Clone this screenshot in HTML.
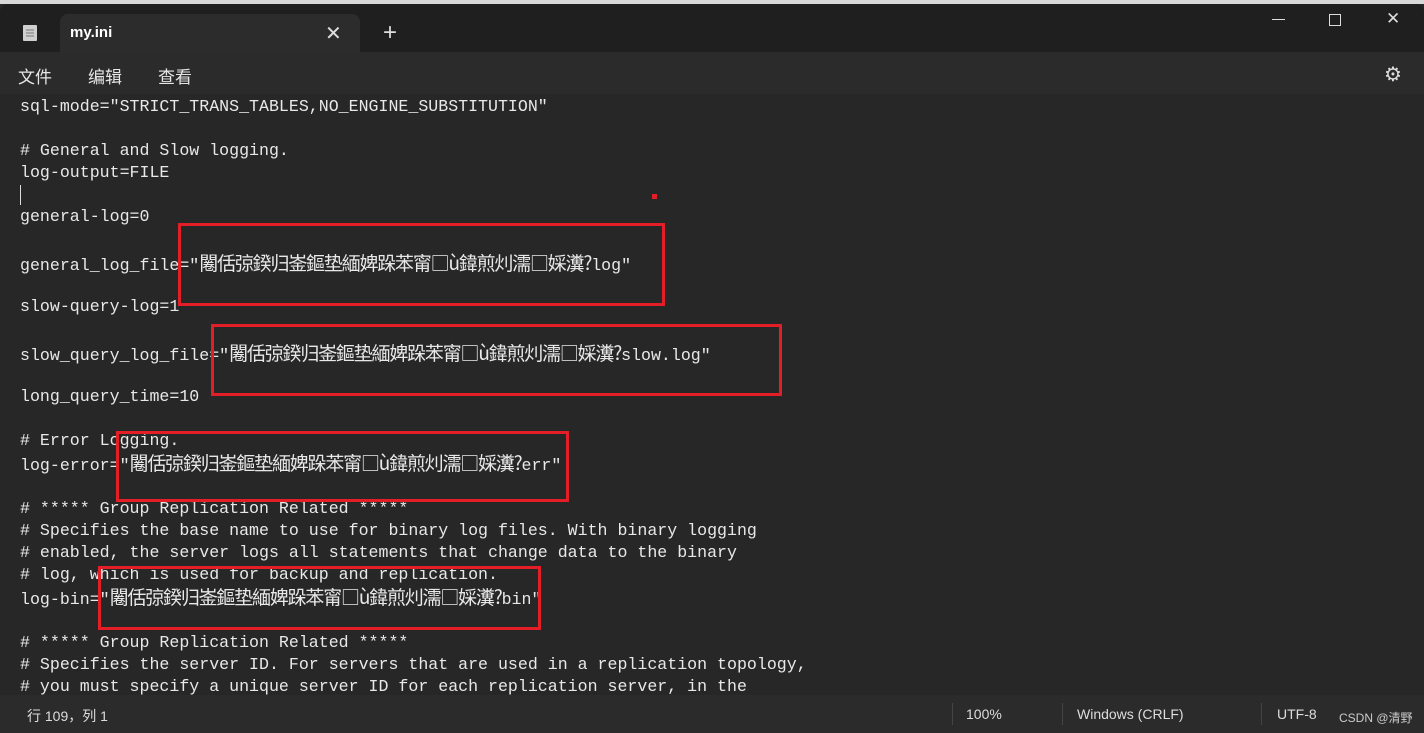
<!DOCTYPE html>
<html><head><meta charset="utf-8"><style>
body{margin:0;width:1424px;height:733px;overflow:hidden;background:#272727;position:relative;font-family:"Liberation Sans","Noto Sans CJK SC",sans-serif;color:#e6e6e6}
.top{position:absolute;left:0;top:0;width:1424px;height:4px;background:#d8d8d8}
.title{position:absolute;left:0;top:4px;width:1424px;height:48px;background:#1f1f1f;border-radius:8px 8px 0 0}
.tab{position:absolute;left:60px;top:14px;width:300px;height:38px;background:#2c2c2c;border-radius:8px 8px 0 0}
.menu{position:absolute;left:0;top:52px;width:1424px;height:42px;background:#2b2b2b}
.status{position:absolute;left:0;top:695px;width:1424px;height:38px;background:#2b2b2b;font-size:14px;color:#ddd}
.l{position:absolute;left:20px;font-family:"Liberation Mono",monospace;font-size:16.6px;white-space:pre;color:#e8e8e8;line-height:22px}
.c{font-family:"Noto Sans CJK SC",sans-serif;font-size:19px;letter-spacing:-1.2px}
.box{position:absolute;border:3px solid #e41e26}
.sep{position:absolute;top:8px;width:1px;height:22px;background:#444}
</style></head><body>
<div class="top"></div>
<div class="title"></div>
<div class="tab"></div>
<svg style="position:absolute;left:22px;top:24px" width="16" height="18"><rect x="1" y="1" width="14" height="16" rx="1" fill="#cfcfcf"/><path d="M4 6h8M4 9h8M4 12h8" stroke="#777" stroke-width="1"/></svg>
<div style="position:absolute;left:70px;top:24px;font-size:15px;font-weight:bold;color:#fff">my.ini</div>
<div style="position:absolute;left:325px;top:21px;font-size:20px;color:#ddd">✕</div>
<div style="position:absolute;left:383px;top:19px;font-size:24px;color:#ddd">+</div>
<div style="position:absolute;left:1272px;top:19px;width:13px;height:1px;background:#ddd"></div>
<div style="position:absolute;left:1329px;top:14px;width:10px;height:10px;border:1px solid #ddd"></div>
<div style="position:absolute;left:1386px;top:9px;font-size:17px;color:#ddd">✕</div>
<div class="menu"></div>
<div style="position:absolute;left:18px;top:63px;font-size:17px">文件</div>
<div style="position:absolute;left:88px;top:63px;font-size:17px">编辑</div>
<div style="position:absolute;left:158px;top:63px;font-size:17px">查看</div>
<div style="position:absolute;left:1384px;top:62px;font-size:20px;color:#ddd">⚙</div>

<div class="l" style="top:96px">sql-mode="STRICT_TRANS_TABLES,NO_ENGINE_SUBSTITUTION"</div>
<div class="l" style="top:140px"># General and Slow logging.</div>
<div class="l" style="top:162px">log-output=FILE</div>
<div style="position:absolute;left:20px;top:185px;width:1px;height:20px;background:#ddd"></div>
<div class="l" style="top:206px">general-log=0</div>
<div class="l" style="top:252px">general_log_file="<span class="c">闂佸弶鍨归崟鏂垫緬婢跺苯甯□ù鍏煎灲濡□婇瀵?</span>log"</div>
<div class="l" style="top:296px">slow-query-log=1</div>
<div class="l" style="top:342px">slow_query_log_file="<span class="c">闂佸弶鍨归崟鏂垫緬婢跺苯甯□ù鍏煎灲濡□婇瀵?</span>slow.log"</div>
<div class="l" style="top:386px">long_query_time=10</div>
<div class="l" style="top:430px"># Error Logging.</div>
<div class="l" style="top:452px">log-error="<span class="c">闂佸弶鍨归崟鏂垫緬婢跺苯甯□ù鍏煎灲濡□婇瀵?</span>err"</div>
<div class="l" style="top:498px"># ***** Group Replication Related *****</div>
<div class="l" style="top:520px"># Specifies the base name to use for binary log files. With binary logging</div>
<div class="l" style="top:542px"># enabled, the server logs all statements that change data to the binary</div>
<div class="l" style="top:564px"># log, which is used for backup and replication.</div>
<div class="l" style="top:586px">log-bin="<span class="c">闂佸弶鍨归崟鏂垫緬婢跺苯甯□ù鍏煎灲濡□婇瀵?</span>bin"</div>
<div class="l" style="top:632px"># ***** Group Replication Related *****</div>
<div class="l" style="top:654px"># Specifies the server ID. For servers that are used in a replication topology,</div>
<div class="l" style="top:676px"># you must specify a unique server ID for each replication server, in the</div>

<div class="box" style="left:178px;top:223px;width:481px;height:77px"></div>
<div class="box" style="left:211px;top:324px;width:565px;height:66px"></div>
<div class="box" style="left:116px;top:431px;width:447px;height:65px"></div>
<div class="box" style="left:98px;top:566px;width:437px;height:58px"></div>
<div style="position:absolute;left:652px;top:194px;width:5px;height:5px;background:#e41e26"></div>

<div class="status">
<div style="position:absolute;left:27px;top:11px">行 109，列 1</div>
<div class="sep" style="left:952px"></div>
<div style="position:absolute;left:966px;top:11px">100%</div>
<div class="sep" style="left:1062px"></div>
<div style="position:absolute;left:1077px;top:11px">Windows (CRLF)</div>
<div class="sep" style="left:1261px"></div>
<div style="position:absolute;left:1277px;top:11px">UTF-8</div>
<div style="position:absolute;left:1339px;top:14px;font-size:12px;color:#ccc">CSDN @清野</div>
</div>
</body></html>
